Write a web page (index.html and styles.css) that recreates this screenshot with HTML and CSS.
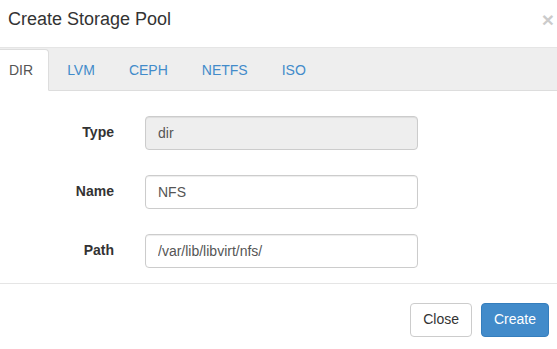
FILE: index.html
```html
<!DOCTYPE html>
<html lang="en">
<head>
    <meta charset="UTF-8">
    <meta name="viewport" content="width=device-width, initial-scale=1.0">
    <title>Create Storage Pool</title>
    <link rel="stylesheet" href="styles.css">
</head>
<body>
    <div class="modal">
        <div class="modal-header">
            <button type="button" class="close">&times;</button>
            <h4 class="modal-title">Create Storage Pool</h4>
        </div>
        <ul class="nav-tabs">
            <li class="active"><a href="#">DIR</a></li>
            <li><a href="#">LVM</a></li>
            <li><a href="#">CEPH</a></li>
            <li><a href="#">NETFS</a></li>
            <li><a href="#">ISO</a></li>
        </ul>
        <div class="modal-body">
            <form class="form-horizontal">
                <div class="form-group">
                    <label for="poolType">Type</label>
                    <input type="text" id="poolType" class="form-control" value="dir" disabled>
                </div>
                <div class="form-group">
                    <label for="poolName">Name</label>
                    <input type="text" id="poolName" class="form-control" value="NFS">
                </div>
                <div class="form-group">
                    <label for="poolPath">Path</label>
                    <input type="text" id="poolPath" class="form-control" value="/var/lib/libvirt/nfs/">
                </div>
            </form>
        </div>
        <div class="modal-footer">
            <button type="button" class="btn btn-default">Close</button>
            <button type="button" class="btn btn-primary">Create</button>
        </div>
    </div>
</body>
</html>
```

FILE: styles.css
```css
html, body {
    overflow: hidden;
}
body {
    margin: 0;
    background: #fff;
    font-family: "Liberation Sans", Arial, sans-serif;
    font-size: 14px;
    line-height: 1.42857;
    color: #333;
}
.modal {
    width: 576px;
    margin: -8px 0 0 -7px;
    background: #fff;
}
.modal-header {
    padding: 15px;
    border-bottom: 1px solid #e5e5e5;
}
.modal-title {
    margin: 0;
    font-size: 18px;
    font-weight: normal;
    line-height: 25px;
}
.close {
    float: right;
    margin-top: 2px;
    padding: 0;
    border: 0;
    background: transparent;
    font-family: "Liberation Sans", Arial, sans-serif;
    font-size: 21px;
    font-weight: bold;
    line-height: 1;
    color: #000;
    opacity: 0.2;
    text-shadow: 0 1px 0 #fff;
    cursor: pointer;
}
.nav-tabs {
    display: flex;
    gap: 2px;
    margin: 0;
    padding: 1px 0 0;
    list-style: none;
    background: #eee;
    border-bottom: 1px solid #ddd;
}
.nav-tabs li {
    margin-bottom: -1px;
}
.nav-tabs a {
    display: block;
    padding: 10px 15px;
    line-height: 20px;
    color: #428bca;
    text-decoration: none;
    border: 1px solid transparent;
    border-radius: 4px 4px 0 0;
}
.nav-tabs .active a {
    color: #555;
    background: #fff;
    border-color: #ddd #ddd transparent;
}
.modal-body {
    padding: 25px 20px 15px;
}
.form-horizontal {
    margin: 0;
}
.form-group {
    display: flex;
    align-items: center;
    margin-bottom: 25px;
}
.form-group:last-child {
    margin-bottom: 0;
}
.form-group label {
    width: 101px;
    text-align: right;
    font-weight: bold;
}
.form-control {
    box-sizing: border-box;
    width: 273px;
    height: 34px;
    margin-left: 31px;
    padding: 6px 12px;
    font-family: inherit;
    font-size: 14px;
    line-height: 1.42857;
    color: #555;
    background: #fff;
    border: 1px solid #ccc;
    border-radius: 4px;
    box-shadow: inset 0 1px 1px rgba(0, 0, 0, 0.075);
}
.form-control:disabled {
    background: #eee;
    opacity: 1;
}
.modal-footer {
    display: flex;
    justify-content: flex-end;
    gap: 9px;
    padding: 19px 20px 20px;
    border-top: 1px solid #e5e5e5;
}
.btn {
    padding: 6px 12px;
    font-family: inherit;
    font-size: 14px;
    line-height: 1.42857;
    border: 1px solid transparent;
    border-radius: 4px;
    cursor: pointer;
}
.btn-default {
    color: #333;
    background: #fff;
    border-color: #ccc;
}
.btn-primary {
    color: #fff;
    background: #428bca;
    border-color: #357ebd;
}
```
